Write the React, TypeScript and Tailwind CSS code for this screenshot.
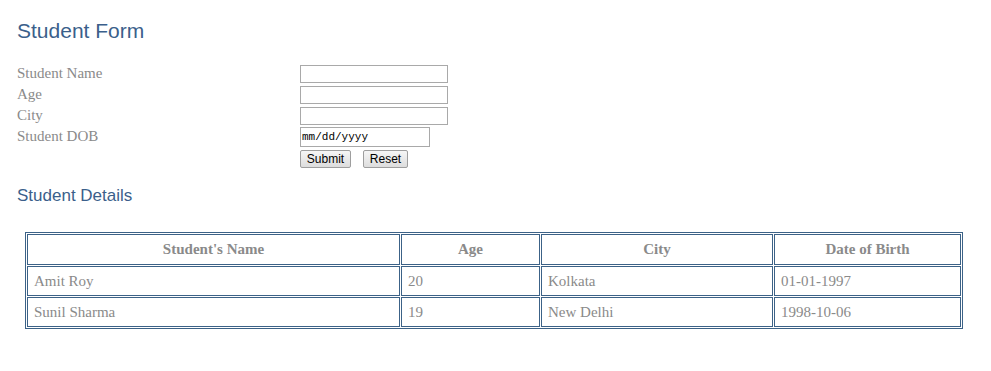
export default function App() {
  const students = [
    { name: "Amit Roy", age: "20", city: "Kolkata", dob: "01-01-1997" },
    { name: "Sunil Sharma", age: "19", city: "New Delhi", dob: "1998-10-06" },
  ];
  const labels = ["Student Name", "Age", "City"];

  return (
    <div className="w-[991px] h-[371px] bg-white px-[17px] pt-[18px]">
      <h1 className="font-['Liberation_Sans',Arial,sans-serif] text-[21px] leading-[26px] text-[#3b5f8b]">
        Student Form
      </h1>

      <div className="mt-[20px] grid grid-cols-[283px_auto] font-['Liberation_Serif',serif] text-[15px] text-[#8a8a8a]">
        {labels.map((label) => (
          <div key={label} className="contents">
            <div className="h-[21px] leading-[19px]">{label}</div>
            <div className="h-[21px] pt-[1px]">
              <input type="text" className="block w-[148px] h-[18px] border border-[#a9a9a9] bg-white outline-none" />
            </div>
          </div>
        ))}
        <div className="h-[22px] leading-[19px]">Student DOB</div>
        <div className="h-[22px]">
          <input
            type="text"
            placeholder="mm/dd/yyyy"
            className="block w-[130px] h-[20px] border border-[#a9a9a9] bg-white px-[1px] font-['Liberation_Mono',monospace] text-[11px] text-black placeholder:text-black outline-none"
          />
        </div>
        <div />
        <div className="flex gap-[12px] pt-[1px] font-['Liberation_Sans',Arial,sans-serif] text-[12px] text-black">
          <button className="w-[51px] h-[18px] border border-[#9e9e9e] rounded-[2px] bg-gradient-to-b from-[#f6f6f6] to-[#dddddd] leading-[16px]">
            Submit
          </button>
          <button className="w-[45px] h-[18px] border border-[#9e9e9e] rounded-[2px] bg-gradient-to-b from-[#f6f6f6] to-[#dddddd] leading-[16px]">
            Reset
          </button>
        </div>
      </div>

      <h2 className="mt-[17px] font-['Liberation_Sans',Arial,sans-serif] text-[17px] leading-[22px] text-[#3b5f8b]">
        Student Details
      </h2>

      <table className="mt-[25px] ml-[8px] w-[938px] border border-[#3c6287] border-separate border-spacing-[1px] font-['Liberation_Serif',serif] text-[15px] text-[#8a8a8a]">
        <thead>
          <tr className="h-[31px]">
            <th className="w-[373px] border border-[#3c6287] font-bold">Student's Name</th>
            <th className="w-[139px] border border-[#3c6287] font-bold">Age</th>
            <th className="w-[232px] border border-[#3c6287] font-bold">City</th>
            <th className="border border-[#3c6287] font-bold">Date of Birth</th>
          </tr>
        </thead>
        <tbody>
          {students.map((s) => (
            <tr key={s.name} className="h-[30px]">
              <td className="border border-[#3c6287] px-[6px]">{s.name}</td>
              <td className="border border-[#3c6287] px-[6px]">{s.age}</td>
              <td className="border border-[#3c6287] px-[6px]">{s.city}</td>
              <td className="border border-[#3c6287] px-[6px]">{s.dob}</td>
            </tr>
          ))}
        </tbody>
      </table>
    </div>
  );
}
